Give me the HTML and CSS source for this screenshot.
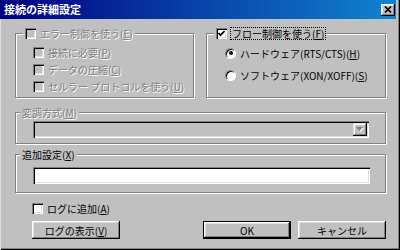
FILE: index.html
```html
<!DOCTYPE html>
<html lang="ja">
<head>
<meta charset="UTF-8">
<title>接続の詳細設定</title>
<link rel="stylesheet" href="styles.css">
</head>
<body>
<div class="window">
    <div class="titlebar">
        <span class="title">接続の詳細設定</span>
        <span class="close">
            <svg width="8" height="7" viewBox="0 0 8 7"><path d="M1 0.5L7 6.5M7 0.5L1 6.5" stroke="#000" stroke-width="1.7"/></svg>
        </span>
    </div>
    <div class="body">
        <div class="top">
            <fieldset class="group">
                <legend class="boxed disabled"><span class="check"></span><span>エラー制御を使う(<u>E</u>)</span></legend>
                <div class="list">
                    <div class="item disabled"><span class="check"></span><span>接続に必要(<u>P</u>)</span></div>
                    <div class="item disabled"><span class="check"></span><span>データの圧縮(<u>C</u>)</span></div>
                    <div class="item disabled"><span class="check"></span><span>セルラー プロトコルを使う(<u>U</u>)</span></div>
                </div>
            </fieldset>
            <fieldset class="group">
                <legend class="boxed">
                    <span class="check">
                        <svg width="7" height="7" viewBox="0 0 7 7"><polyline points="0.5,3 2.5,5.2 6.6,1" fill="none" stroke="#000" stroke-width="1.7"/></svg>
                    </span>
                    <span class="focus">フロー制御を使う(<u>F</u>)</span>
                </legend>
                <div class="radios">
                    <div class="item"><span class="radio on"></span><span>ハードウェア(RTS/CTS)(<u>H</u>)</span></div>
                    <div class="item"><span class="radio"></span><span>ソフトウェア(XON/XOFF)(<u>S</u>)</span></div>
                </div>
            </fieldset>
        </div>

        <fieldset class="group modem">
            <legend class="disabled"><span>変調方式(<u>M</u>)</span></legend>
            <div class="combo">
                <span class="drop">
                    <svg width="8" height="5" viewBox="0 0 8 5"><path d="M1 1h7l-3.5 4z" fill="#fff"/><path d="M0 0h7l-3.5 4z" fill="#808080"/></svg>
                </span>
            </div>
        </fieldset>

        <fieldset class="group extra">
            <legend><span>追加設定(<u>X</u>)</span></legend>
            <div class="field"></div>
        </fieldset>

        <div class="footer">
            <div class="log">
                <div class="item"><span class="check"></span><span>ログに追加(<u>A</u>)</span></div>
                <span class="btn"><span>ログの表示(<u>V</u>)</span></span>
            </div>
            <div class="actions">
                <span class="btn default">OK</span>
                <span class="btn">キャンセル</span>
            </div>
        </div>
    </div>
</div>
</body>
</html>
```

FILE: styles.css
```css
* {
    box-sizing: border-box;
}

body {
    margin: 0;
    background: #c0c0c0;
    font-family: "Noto Sans CJK JP", "Noto Sans", sans-serif;
    font-size: 10px;
    color: #000;
}

.window {
    width: 400px;
    height: 250px;
    padding-right: 4px;
    background: #c0c0c0;
    box-shadow: inset 1px 0 #dfdfdf, inset -1px -1px #000, inset -2px -2px #808080;
}

.titlebar {
    height: 19px;
    display: flex;
    align-items: center;
    padding: 0 1px 0 4px;
    background: linear-gradient(90deg, #000080, #1084d0);
    color: #fff;
}

.title {
    font-size: 11px;
    font-weight: bold;
    line-height: 19px;
}

.close {
    margin-left: auto;
    width: 14px;
    height: 12px;
    display: flex;
    align-items: center;
    justify-content: center;
    background: #c0c0c0;
    box-shadow: inset -1px -1px #000, inset 1px 1px #fff, inset -2px -2px #808080, inset 2px 2px #dfdfdf;
}

.body {
    padding: 8px 10px 0 15px;
}

.top {
    display: grid;
    grid-template-columns: 179px 180px;
    column-gap: 12px;
}

/* group box, etched line */
.group {
    margin: 0;
    padding: 0;
    min-width: 0;
    border: 1px solid #808080;
    box-shadow: inset 1px 1px #fff, 1px 1px #fff;
}

legend {
    display: flex;
    align-items: center;
    gap: 4px;
    height: 13px;
    line-height: 13px;
    margin-left: 4px;
    padding: 0 2px;
    background: #c0c0c0;
}

legend.boxed {
    margin-left: 7px;
}

.focus {
    outline: 1px dotted #000;
    line-height: 11px;
    padding: 0 1px;
}

.list {
    padding: 4px 0 2px 17px;
}

.radios {
    padding: 2px 0 0 18px;
}

.item {
    display: flex;
    align-items: center;
    gap: 4px;
    height: 17px;
    white-space: nowrap;
}

.radios .item {
    height: 22px;
}

.disabled {
    color: #808080;
    text-shadow: 1px 1px #fff;
}

.check {
    width: 11px;
    height: 11px;
    flex: none;
    display: flex;
    align-items: center;
    justify-content: center;
    background: #fff;
    box-shadow: inset 1px 1px #808080, inset 2px 2px #000, inset -1px -1px #fff, inset -2px -2px #dfdfdf;
}

.disabled .check {
    background: #c0c0c0;
}

.radio {
    position: relative;
    width: 11px;
    height: 11px;
    flex: none;
    border-radius: 50%;
    background: #fff;
    border: 1px solid;
    border-color: #808080 #fff #fff #808080;
    box-shadow: inset 1px 1px #000;
}

.radio.on::after {
    content: "";
    position: absolute;
    left: 2.5px;
    top: 2.5px;
    width: 4px;
    height: 4px;
    border-radius: 50%;
    background: #000;
}

.modem {
    margin-top: 8px;
}

.combo {
    height: 17px;
    margin: 2px 16px 5px 17px;
    padding: 2px;
    display: flex;
    justify-content: flex-end;
    background: #c0c0c0;
    box-shadow: inset 1px 1px #808080, inset 2px 2px #000, inset -1px -1px #fff, inset -2px -2px #dfdfdf;
}

.drop {
    width: 14px;
    height: 13px;
    display: flex;
    align-items: center;
    justify-content: center;
    background: #c0c0c0;
    box-shadow: inset -1px -1px #000, inset 1px 1px #dfdfdf, inset -2px -2px #808080, inset 2px 2px #fff;
}

.extra {
    margin-top: 4px;
}

.field {
    height: 17px;
    margin: 6px 15px 8px 17px;
    background: #fff;
    box-shadow: inset 1px 1px #808080, inset 2px 2px #000, inset -1px -1px #fff, inset -2px -2px #dfdfdf;
}

.footer {
    display: flex;
    justify-content: space-between;
    align-items: flex-end;
    margin-top: 9px;
    padding-left: 17px;
}

.log {
    display: flex;
    flex-direction: column;
    gap: 6px;
}

.log .item {
    height: 13px;
}

.actions {
    display: flex;
    gap: 7px;
}

.btn {
    width: 88px;
    height: 18px;
    display: flex;
    align-items: center;
    justify-content: center;
    background: #c0c0c0;
    box-shadow: inset -1px -1px #000, inset 1px 1px #fff, inset -2px -2px #808080, inset 2px 2px #dfdfdf;
}

.btn.default {
    box-shadow: inset 0 0 0 1px #000, inset -2px -2px #000, inset 2px 2px #fff, inset -3px -3px #808080, inset 3px 3px #dfdfdf;
}
```
